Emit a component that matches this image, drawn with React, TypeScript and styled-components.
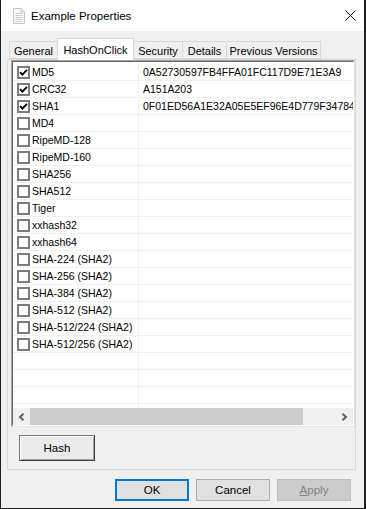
import React from 'react';
import styled, { createGlobalStyle } from 'styled-components';

// Styles
const GlobalStyle = createGlobalStyle`
	html,
	body {
		margin: 0;
		padding: 0;
		background: #f0f0f0;
	}

	body {
		font-family: 'Liberation Sans', Arial, sans-serif;
		font-size: 11.5px;
		color: #000;
	}
`;

const Window = styled.div`
	width: 366px;
	height: 509px;
	box-sizing: border-box;
	border-left: 1px solid #1f1f1f;
	border-right: 2px solid #1f1f1f;
	border-bottom: 1px solid #1f1f1f;
	background: #f0f0f0;
	display: flex;
	flex-direction: column;
	overflow: hidden;
`;

const TitleBar = styled.div`
	height: 31px;
	flex: none;
	background: #fff;
	display: flex;
	align-items: center;
	padding-left: 10px;
	padding-right: 8px;
`;

const Title = styled.span`
	flex: 1;
	margin-left: 4px;
	font-size: 11.5px;
	line-height: 16px;
`;

const Body = styled.div`
	flex: 1;
	display: flex;
	flex-direction: column;
	padding: 7px 8px 0 6px;
`;

const TabStrip = styled.div`
	height: 21px;
	display: flex;
	align-items: flex-end;
	padding-left: 2px;
	position: relative;
	z-index: 1;
`;

const Tab = styled.div<{ $width: number; $active?: boolean }>`
	width: ${(p) => p.$width}px;
	height: ${(p) => (p.$active ? 22 : 18)}px;
	margin-bottom: ${(p) => (p.$active ? -1 : 0)}px;
	box-sizing: border-box;
	border: 1px solid #d9d9d9;
	border-bottom: ${(p) => (p.$active ? 'none' : '1px solid #d9d9d9')};
	margin-left: -1px;
	background: ${(p) => (p.$active ? '#fff' : '#f0f0f0')};
	display: flex;
	align-items: center;
	justify-content: center;
	padding-top: ${(p) => (p.$active ? 0 : 1)}px;
	font-size: 11px;
	white-space: nowrap;

	&:first-child {
		margin-left: 0;
	}
`;

const Panel = styled.div`
	border: 1px solid #d9d9d9;
	padding-left: 3px;
	display: flex;
	flex-direction: column;
`;

const ListFrame = styled.div`
	height: 367px;
	box-sizing: border-box;
	border: 1px solid;
	border-color: #a0a0a0 #e3e3e3 #e3e3e3 #a0a0a0;
`;

const ListInner = styled.div`
	height: 100%;
	box-sizing: border-box;
	border: 1px solid;
	border-color: #696969 #fff #fff #696969;
	background: #fff;
	display: flex;
	flex-direction: column;
`;

const Rows = styled.div`
	flex: 1;
	overflow: hidden;
	padding-top: 2px;
	font-size: 10.5px;
`;

const Row = styled.div`
	height: 17px;
	box-sizing: border-box;
	border-bottom: 1px solid #f0f0f0;
	display: flex;
	align-items: center;
`;

const NameCell = styled.div`
	width: 126px;
	height: 100%;
	box-sizing: border-box;
	border-right: 1px solid #f0f0f0;
	padding-left: 4px;
	display: flex;
	align-items: center;
	flex: none;
`;

const ValueCell = styled.div`
	flex: 1;
	padding-left: 4px;
	white-space: nowrap;
	overflow: hidden;
`;

const Box = styled.span`
	width: 13px;
	height: 13px;
	box-sizing: border-box;
	border: 2px solid #7c7c7c;
	background: #fff;
	margin-right: 2px;
	display: flex;
	align-items: center;
	justify-content: center;
	flex: none;
`;

const ScrollBar = styled.div`
	height: 17px;
	flex: none;
	background: #f0f0f0;
	display: flex;
	align-items: stretch;
`;

const ScrollArrow = styled.div`
	width: 17px;
	display: flex;
	align-items: center;
	justify-content: center;
	flex: none;
`;

const ScrollTrack = styled.div`
	flex: 1;
	display: flex;
	align-items: stretch;
`;

const ScrollThumb = styled.div`
	width: 273px;
	background: #cdcdcd;
`;

const HashButton = styled.button`
	width: 76px;
	height: 26px;
	margin: 8px 0 8px 8px;
	box-sizing: border-box;
	border: 1px solid;
	border-color: #7a7a7a #3f3f3f #3f3f3f #7a7a7a;
	box-shadow: inset 1px 1px 0 #fff, inset -1px -1px 0 #a0a0a0;
	background: #ececec;
	font-family: inherit;
	font-size: 11.5px;
	color: #000;
	padding: 0;
`;

const Footer = styled.div`
	display: flex;
	justify-content: flex-end;
	gap: 7px;
	margin-top: 9px;
	padding-right: 5px;
`;

const DialogButton = styled.button<{ $primary?: boolean; $disabled?: boolean }>`
	width: 74px;
	height: 22px;
	box-sizing: border-box;
	border: ${(p) => (p.$primary ? '2px solid #0078d7' : p.$disabled ? '1px solid #bfbfbf' : '1px solid #adadad')};
	background: ${(p) => (p.$disabled ? '#cccccc' : '#e1e1e1')};
	color: ${(p) => (p.$disabled ? '#838383' : '#000')};
	font-family: inherit;
	font-size: 11.5px;
	padding: 0;

	u {
		text-decoration: underline;
	}
`;

const hashes: { name: string; value?: string; checked?: boolean }[] = [
	{ name: 'MD5', value: '0A52730597FB4FFA01FC117D9E71E3A9', checked: true },
	{ name: 'CRC32', value: 'A151A203', checked: true },
	{ name: 'SHA1', value: '0F01ED56A1E32A05E5EF96E4D779F34784A1C3B2', checked: true },
	{ name: 'MD4' },
	{ name: 'RipeMD-128' },
	{ name: 'RipeMD-160' },
	{ name: 'SHA256' },
	{ name: 'SHA512' },
	{ name: 'Tiger' },
	{ name: 'xxhash32' },
	{ name: 'xxhash64' },
	{ name: 'SHA-224 (SHA2)' },
	{ name: 'SHA-256 (SHA2)' },
	{ name: 'SHA-384 (SHA2)' },
	{ name: 'SHA-512 (SHA2)' },
	{ name: 'SHA-512/224 (SHA2)' },
	{ name: 'SHA-512/256 (SHA2)' },
	{ name: '' },
	{ name: '' },
	{ name: '' },
	{ name: '' },
];

const tabs = [
	{ label: 'General', width: 49 },
	{ label: 'HashOnClick', width: 77, active: true },
	{ label: 'Security', width: 50 },
	{ label: 'Details', width: 45 },
	{ label: 'Previous Versions', width: 95 },
];

function PageIcon() {
	return (
		<svg width="16" height="16" viewBox="0 0 16 16">
			<path d="M2.5 0.5 H10 L13.5 4 V15.5 H2.5 Z" fill="#fafafa" stroke="#c4c4c4" />
			<path d="M10 0.5 V4 H13.5" fill="none" stroke="#c4c4c4" />
			<path d="M4.5 5.5 H11.5 M4.5 7.5 H11.5 M4.5 9.5 H11.5 M4.5 11.5 H11.5 M4.5 13.5 H11.5" stroke="#cfcfcf" />
		</svg>
	);
}

function CloseIcon() {
	return (
		<svg width="11" height="11" viewBox="0 0 11 11">
			<path d="M0.5 0.5 L10.5 10.5 M10.5 0.5 L0.5 10.5" stroke="#000" strokeWidth="1" />
		</svg>
	);
}

function Check() {
	return (
		<svg width="9" height="9" viewBox="0 0 9 9">
			<path d="M1 4.2 L3.4 6.6 L8 1.8" fill="none" stroke="#000" strokeWidth="1.9" />
		</svg>
	);
}

function Chevron(props: { right?: boolean }) {
	return (
		<svg width="7" height="8" viewBox="0 0 7 8">
			<path
				d={props.right ? 'M1.5 0.8 L5 4 L1.5 7.2' : 'M5.5 0.8 L2 4 L5.5 7.2'}
				fill="none"
				stroke="#606060"
				strokeWidth="2"
			/>
		</svg>
	);
}

function App() {
	return (
		<>
			<GlobalStyle />
			<Window>
				<TitleBar>
					<PageIcon />
					<Title>Example Properties</Title>
					<CloseIcon />
				</TitleBar>

				<Body>
					<TabStrip>
						{tabs.map((t) => (
							<Tab key={t.label} $width={t.width} $active={t.active}>
								{t.label}
							</Tab>
						))}
					</TabStrip>

					<Panel>
						<ListFrame>
							<ListInner>
								<Rows>
									{hashes.map((h, i) => (
										<Row key={i}>
											<NameCell>
												{h.name && <Box>{h.checked && <Check />}</Box>}
												{h.name}
											</NameCell>
											<ValueCell>{h.value}</ValueCell>
										</Row>
									))}
								</Rows>
								<ScrollBar>
									<ScrollArrow>
										<Chevron />
									</ScrollArrow>
									<ScrollTrack>
										<ScrollThumb />
									</ScrollTrack>
									<ScrollArrow>
										<Chevron right />
									</ScrollArrow>
								</ScrollBar>
							</ListInner>
						</ListFrame>

						<HashButton>Hash</HashButton>
					</Panel>

					<Footer>
						<DialogButton $primary>OK</DialogButton>
						<DialogButton>Cancel</DialogButton>
						<DialogButton $disabled>
							<u>A</u>pply
						</DialogButton>
					</Footer>
				</Body>
			</Window>
		</>
	);
}

export default App;
